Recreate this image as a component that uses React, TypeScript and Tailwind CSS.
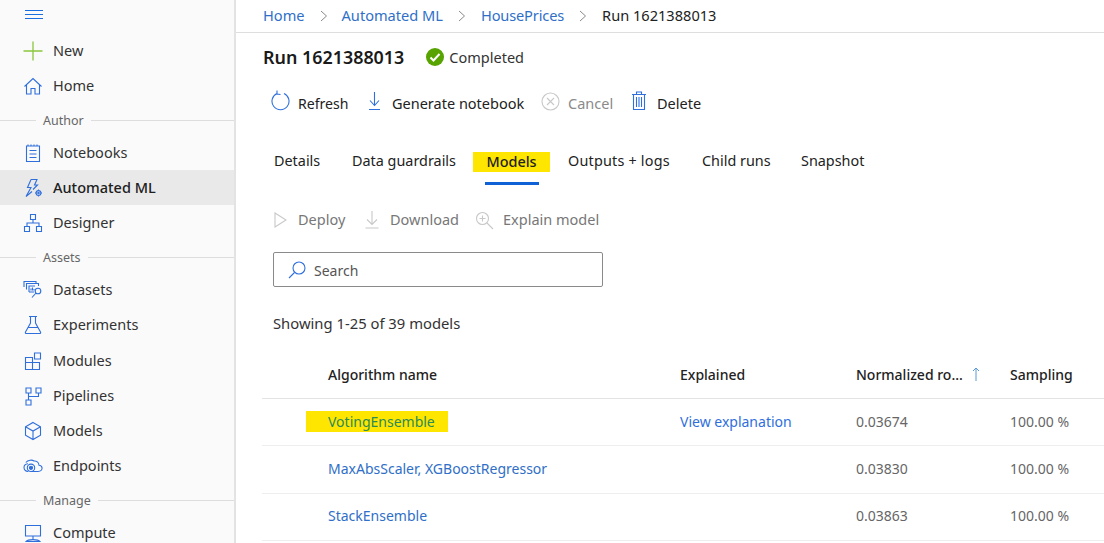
import React from "react";

const B = "#2f6fdc";
const I = (p: { children: React.ReactNode; c?: string; w?: number }) => (
  <svg width={p.w ?? 20} height={p.w ?? 20} viewBox="0 0 20 20" fill="none" stroke={p.c ?? B} strokeWidth="1.1" className="shrink-0">
    {p.children}
  </svg>
);

const icons: Record<string, React.ReactNode> = {
  New: <I c="#8cc63f"><path d="M0.5 10H19.5M10 0.5V19.5" strokeWidth="1.3" /></I>,
  Home: <I><path d="M1.5 10.5L10 2.5L18.5 10.5M3.5 9V18H8V12.5H12V18H16.5V9" /></I>,
  Notebooks: <I><path d="M3.5 3H16.5V18.5H3.5ZM6.5 7.5H13.5M6.5 11H13.5M6.5 14.5H13.5M5 1.5V3M8 1.5V3M11 1.5V3M14 1.5V3" /></I>,
  "Automated ML": <I><path d="M8 1.5H14L11.5 7H14.5L10 11.5M8 1.5L4.5 9.5H8L3 18.5L9 13.5" /><circle cx="15.5" cy="15" r="2.4" /><circle cx="15.5" cy="15" r="0.7" /><path d="M15.5 11.5V12.6M15.5 17.4V18.5M12 15H13.1M17.9 15H19" /></I>,
  Designer: <I><path d="M7.5 1.5H12.5V6.5H7.5ZM1.5 13.5H6.5V18.5H1.5ZM13.5 13.5H18.5V18.5H13.5ZM10 6.5V10M4 13.5V10H16V13.5" /></I>,
  Datasets: <I><path d="M1 7V1.5H13V3M3.5 9.5V3.5H15.5V6M6 12V6H12M6 12H11" /><path d="M8 10.5V8.5M9.5 10.5V7.5M11 10.5V9" /><circle cx="15" cy="11" r="2.8" /><path d="M13 13L9 17.5" /></I>,
  Experiments: <I><path d="M6 1.5H14M7.5 1.5V8L2.5 17C2 18 2.5 18.5 3.5 18.5H16.5C17.5 18.5 18 18 17.5 17L12.5 8V1.5M5 12.5H15" /></I>,
  Modules: <I><path d="M2.5 6.5H9.5V18.5H2.5ZM9.5 11.5H16.5V18.5H2.5M2.5 11.5H9.5M11.5 2H17.5V8H11.5Z" /></I>,
  Pipelines: <I><path d="M3 2H8V7H3ZM13 2H18V7H13ZM3 14H8V19H3ZM5.5 7V14M5.5 10.5H15.5V7" /></I>,
  Models: <I><path d="M10 1.5L17.5 5.7V14.3L10 18.5L2.5 14.3V5.7ZM2.5 5.7L10 10L17.5 5.7M10 10V18.5" /></I>,
  Endpoints: <I><path d="M8 15.5H15C18 15.5 19.5 13.5 19 11.5C18.6 10 17.5 9.2 16 9.2C15.7 6.5 13.5 4.8 11 5C9 3.5 5 4 2.8 6.5" /><path d="M5 7.8C2.5 8 1 9.7 1 11.6C1 14 3 15.8 5.5 15.3" /><circle cx="8" cy="11.8" r="3.7" /><circle cx="8" cy="11.8" r="1.6" fill={B} /></I>,
  Compute: <I><path d="M2.5 2.5H17.5V13H2.5ZM10 13V16M3 18.5C5 16 15 16 17 18.5Z" /></I>,
};

const Nav = ({ name, active, extra }: { name: string; active?: boolean; extra?: boolean }) => (
  <div className={`flex h-[35px] items-center text-[14.5px] ${extra ? "mt-[1px]" : ""} ${active ? "bg-[#e9e9e9] font-medium text-[#202020]" : "text-[#333333]"}`}>
    <span className="flex w-[53px] justify-center pl-[13px]">
      <span className="flex w-[20px]">{icons[name]}</span>
    </span>
    <span>{name}</span>
  </div>
);

const Sec = ({ name }: { name: string }) => (
  <div className="flex h-[32px] items-center pt-[2px] text-[12.5px] text-[#666666]">
    <span className="h-px w-[36px] bg-[#dddddd]" />
    <span className="px-[7px] pt-[3px]">{name}</span>
    <span className="h-px flex-1 bg-[#dddddd]" />
  </div>
);

const Chev = ({ cls }: { cls: string }) => (
  <svg width="8" height="12" viewBox="0 0 8 12" fill="none" stroke="#8a8a8a" strokeWidth="1" className={cls}><path d="M1 1L6.5 6L1 11" /></svg>
);

const Tool = ({ icon, label, muted, cls, text }: { icon: React.ReactNode; label: string; muted?: boolean; cls: string; text?: string }) => (
  <div className={`flex items-center ${cls}`}>
    {icon}
    <span className={`pt-[1px] ${muted ? "text-[#8a8a8a]" : "text-[#222222]"} ${text ?? ""}`}>{label}</span>
  </div>
);

const Row = ({ name, expl, val, hl }: { name: string; expl?: string; val: string; hl?: boolean }) => (
  <div className={`grid grid-cols-[418px_176px_154px_1fr] items-center border-b border-[#eeeeee] pb-[2px] text-[14px] text-[#666666] ${hl ? "h-[47px]" : "h-[47.5px]"}`}>
    <div className="pl-[66px]">
      {hl ? (
        <span className="ml-[-22px] inline-block bg-[#ffe600] py-[1px] pl-[22px] pr-[13px] leading-[19px] text-[#2a8a5a]">{name}</span>
      ) : (
        <span className="text-[#2f6fc8]">{name}</span>
      )}
    </div>
    <div className="text-[#2f6fdc]">{expl}</div>
    <div>{val}</div>
    <div>100.00 %</div>
  </div>
);

export default function App() {
  return (
    <div className="flex h-[543px] w-[1104px] overflow-hidden bg-white font-['Noto_Sans','Open_Sans',sans-serif] text-[14px]">
      <aside className="w-[236px] shrink-0 border-r-2 border-[#e3e3e3] bg-[#fafafa]">
        <div className="flex h-[33px] items-start pl-[25px] pt-[10px]">
          <svg width="18" height="9" viewBox="0 0 18 9" stroke="#1a6fe0" strokeWidth="1"><path d="M0 0.5H18M0 4.5H18M0 8.5H18" /></svg>
        </div>
        <Nav name="New" />
        <Nav name="Home" />
        <Sec name="Author" />
        <Nav name="Notebooks" />
        <Nav name="Automated ML" active />
        <Nav name="Designer" />
        <Sec name="Assets" />
        <Nav name="Datasets" />
        <Nav name="Experiments" />
        <Nav name="Modules" extra />
        <Nav name="Pipelines" />
        <Nav name="Models" />
        <Nav name="Endpoints" />
        <Sec name="Manage" />
        <Nav name="Compute" />
      </aside>
      <main className="min-w-0 flex-1">
        <div className="flex h-[33px] items-center border-b border-[#dedede] pl-[27px] text-[14.6px]">
          <span className="text-[#2f6fc8]">Home</span>
          <Chev cls="ml-[15px] mr-[14px]" />
          <span className="text-[#2f6fc8]">Automated ML</span>
          <Chev cls="mx-[15px]" />
          <span className="tracking-[-0.15px] text-[#2f6fc8]">HousePrices</span>
          <Chev cls="mx-[15px]" />
          <span className="text-[#222222]">Run 1621388013</span>
        </div>
        <div className="flex h-[48px] items-center pl-[27px]">
          <span className="text-[17.9px] font-semibold text-[#1a1a1a]">Run 1621388013</span>
          <svg width="18" height="18" viewBox="0 0 18 18" className="ml-[22px] mr-[5px]">
            <circle cx="9" cy="9" r="9" fill="#57a300" />
            <path d="M4.5 9.5L7.5 12.5L13.5 6" fill="none" stroke="white" strokeWidth="2" />
          </svg>
          <span className="pt-[2px] text-[14.5px] text-[#333333]">Completed</span>
        </div>
        <div className="flex h-[44px] items-center pl-[35px] text-[14.5px]">
          <Tool cls="w-[96px]" text="text-[14.1px]" label="Refresh" icon={<svg width="20" height="22" viewBox="0 0 20 22" fill="none" stroke={B} strokeWidth="1.1" className="mr-[7px] mt-[-4px]"><path d="M6 3.5A8.5 8.5 0 1 0 13 3.5M6 0.5L6 4L9.5 4.5" /></svg>} />
          <Tool cls="w-[174px]" label="Generate notebook" icon={<svg width="15" height="20" viewBox="0 0 15 20" fill="none" stroke={B} strokeWidth="1.1" className="mr-[10px] mt-[-4px]"><path d="M7.5 1V14M3 9.5L7.5 14.5L12 9.5M2 18.5H13" /></svg>} />
          <Tool cls="w-[90px]" muted label="Cancel" icon={<svg width="19" height="19" viewBox="0 0 19 19" fill="none" stroke="#c8c8c8" strokeWidth="1.1" className="mr-[8px] mt-[-4px]"><circle cx="9.5" cy="9.5" r="8.5" /><path d="M6 6L13 13M13 6L6 13" /></svg>} />
          <Tool cls="" label="Delete" icon={<svg width="16" height="20" viewBox="0 0 16 20" fill="none" stroke={B} strokeWidth="1.1" className="mr-[10px] mt-[-4px]"><path d="M1 3.5H15M5.5 3.5V1H10.5V3.5M2.5 3.5V18.5H13.5V3.5M5.5 6V16M8 6V16M10.5 6V16" /></svg>} />
        </div>
        <div className="mt-[25px] flex h-[38px] pl-[38px] text-[14.4px] text-[#222222]">
          <span className="w-[78px]">Details</span>
          <span className="w-[134px]">Data guardrails</span>
          <span className="w-[82px] pt-[2px]">
            <span className="ml-[-13px] flex h-[20px] w-[77px] items-center justify-center bg-[#ffe600] pb-[1px] font-medium text-[#222222]">Models</span>
            <span className="ml-[-1px] mt-[10px] block h-[3px] w-[54px] bg-[#0f62d6]" />
          </span>
          <span className="w-[134px] tracking-[0.2px]">Outputs + logs</span>
          <span className="w-[99px]">Child runs</span>
          <span>Snapshot</span>
        </div>
        <div className="mt-[16px] flex h-[32px] items-center pl-[38px] text-[14.5px] text-[#777777]">
          <svg width="13" height="16" viewBox="0 0 13 16" fill="none" stroke="#c8c8c8" strokeWidth="1.1" className="mr-[11px]"><path d="M1 1L12 8L1 15Z" /></svg>
          <span className="w-[67px]">Deploy</span>
          <svg width="14" height="18" viewBox="0 0 14 18" fill="none" stroke="#c8c8c8" strokeWidth="1.1" className="mr-[11px]"><path d="M7 0V13M2 8.5L7 13.5L12 8.5M0.5 17H13.5" /></svg>
          <span className="w-[85px]">Download</span>
          <svg width="19" height="19" viewBox="0 0 19 19" fill="none" stroke="#c8c8c8" strokeWidth="1.1" className="mr-[9px]"><circle cx="7.5" cy="7.5" r="6" /><path d="M4.5 7.5H10.5M7.5 4.5V10.5M12 12L18 18" /></svg>
          <span>Explain model</span>
        </div>
        <div className="ml-[37px] mt-[16px] flex h-[35px] w-[330px] items-center rounded-[2px] border border-[#8a8a8a] pl-[14px] text-[#555555]">
          <svg width="18" height="18" viewBox="0 0 18 18" fill="none" stroke={B} strokeWidth="1.1" className="mr-[8px]"><circle cx="11" cy="7" r="6" /><path d="M6.5 11.5L1 17" /></svg>
          <span className="pt-[1px]">Search</span>
        </div>
        <div className="mt-[24px] pl-[37px] text-[14.8px] leading-[24px] text-[#333333]">Showing 1-25 of 39 models</div>
        <div className="ml-[26px] mt-[25px]">
          <div className="grid h-[39px] grid-cols-[418px_176px_154px_1fr] items-center border-b border-[#e4e4e4] pb-[10px] text-[14px] font-medium text-[#222222]">
            <div className="pl-[66px]">Algorithm name</div>
            <div>Explained</div>
            <div className="flex items-center">
              Normalized ro...
              <svg width="8" height="14" viewBox="0 0 8 14" fill="none" stroke="#5b9bd5" strokeWidth="1" className="ml-[9px]"><path d="M4 14V1M1 4L4 1L7 4" /></svg>
            </div>
            <div>Sampling</div>
          </div>
          <Row name="VotingEnsemble" expl="View explanation" val="0.03674" hl />
          <Row name="MaxAbsScaler, XGBoostRegressor" val="0.03830" />
          <Row name="StackEnsemble" val="0.03863" />
        </div>
      </main>
    </div>
  );
}
